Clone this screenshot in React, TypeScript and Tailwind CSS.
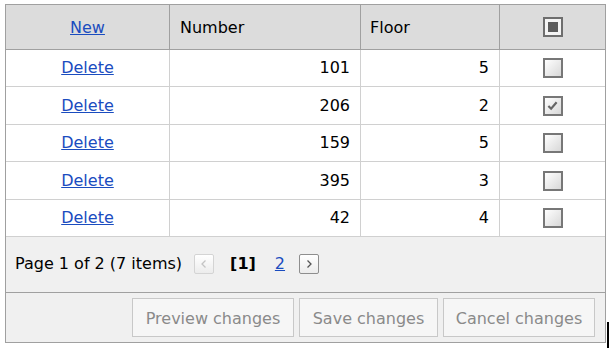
import { ReactNode } from "react";

const rows = [
    { number: 101, floor: 5, checked: false, h: "h-[37px]" },
    { number: 206, floor: 2, checked: true, h: "h-[38px]" },
    { number: 159, floor: 5, checked: false, h: "h-[37px]" },
    { number: 395, floor: 3, checked: false, h: "h-[38px]" },
    { number: 42, floor: 4, checked: false, h: "h-[37px]" },
];

const cols = "grid grid-cols-[164px_191px_139px_105px]";

function CheckBox({ checked }: { checked: boolean }) {
    return (
        <span className="flex w-[20px] h-[20px] items-center justify-center border-2 border-[#777777] bg-gradient-to-br from-white to-[#d8d8d8]">
            {checked && (
                <svg viewBox="0 0 12 12" className="w-[11px] h-[11px]">
                    <path d="M1.5 6.5 L4.5 9.5 L10.5 2.5" fill="none" stroke="#666666" strokeWidth="2.4" />
                </svg>
            )}
        </span>
    );
}

function PagerArrow({ dir, disabled }: { dir: "left" | "right"; disabled?: boolean }) {
    return (
        <span
            className={`flex w-[20px] h-[20px] items-center justify-center rounded-[2px] border bg-gradient-to-b from-white to-[#ececec] ${
                disabled ? "border-[#d4d4d4]" : "border-[#8e8e8e]"
            }`}
        >
            <svg viewBox="0 0 10 10" className="w-[10px] h-[10px]">
                <path
                    d={dir === "left" ? "M6.5 1.5 L3 5 L6.5 8.5" : "M3.5 1.5 L7 5 L3.5 8.5"}
                    fill="none"
                    stroke={disabled ? "#c4c4c4" : "#555555"}
                    strokeWidth="1.3"
                />
            </svg>
        </span>
    );
}

function Cell({ children, className = "" }: { children?: ReactNode; className?: string }) {
    return <div className={`flex items-center border-r border-[#d0d0d0] ${className}`}>{children}</div>;
}

export default function App() {
    return (
        <div className="relative w-[609px] h-[348px] bg-white pl-[5px] pt-[4px] text-[16px] text-black font-['DejaVu_Sans',sans-serif]">
            <div className="w-[601px] border border-[#a0a0a0]">
                {/* Header */}
                <div className={`${cols} h-[45px] bg-[#dcdcdc] border-b border-[#a0a0a0]`}>
                    <div className="flex items-center justify-center pt-[2px] border-r border-[#a0a0a0]">
                        <a href="#" className="text-[#1a4cbf] underline">New</a>
                    </div>
                    <div className="flex items-center pl-[10px] pt-[2px] border-r border-[#a0a0a0]">Number</div>
                    <div className="flex items-center pl-[9px] pt-[2px] border-r border-[#a0a0a0]">Floor</div>
                    <div className="flex items-center justify-center">
                        <span className="flex w-[20px] h-[20px] border-2 border-[#6e6e6e] bg-[#f4f4f4] p-[3px]">
                            <span className="flex-1 bg-[#5c5c5c]" />
                        </span>
                    </div>
                </div>

                {/* Rows */}
                {rows.map((r) => (
                    <div key={r.number} className={`${cols} ${r.h} border-b border-[#d0d0d0]`}>
                        <Cell className="justify-center">
                            <a href="#" className="text-[#1a4cbf] underline">Delete</a>
                        </Cell>
                        <Cell className="justify-end pr-[10px]">{r.number}</Cell>
                        <Cell className="justify-end pr-[10px]">{r.floor}</Cell>
                        <div className="flex items-center justify-center">
                            <CheckBox checked={r.checked} />
                        </div>
                    </div>
                ))}

                {/* Pager */}
                <div className="flex h-[56px] items-center bg-[#f0f0f0] border-b border-[#a0a0a0] pl-[9px] pb-[1px]">
                    <span>Page 1 of 2 (7 items)</span>
                    <span className="ml-[12px]">
                        <PagerArrow dir="left" disabled />
                    </span>
                    <span className="ml-[16px] font-bold">[1]</span>
                    <a href="#" className="ml-[19px] text-[#1a4cbf] underline">2</a>
                    <span className="ml-[14px]">
                        <PagerArrow dir="right" />
                    </span>
                </div>

                {/* Batch edit buttons */}
                <div className="flex h-[49px] justify-end gap-[5px] bg-[#f0f0f0] pt-[5px] pr-[10px]">
                    {[
                        { label: "Preview changes", w: "w-[162px]" },
                        { label: "Save changes", w: "w-[139px]" },
                        { label: "Cancel changes", w: "w-[152px]" },
                    ].map((b) => (
                        <button
                            key={b.label}
                            className={`${b.w} h-[39px] pt-[3px] border border-[#c8c8c8] bg-[#f6f6f6] text-[#8a8a8a]`}
                        >
                            {b.label}
                        </button>
                    ))}
                </div>
            </div>
            <div className="absolute left-[607px] top-[322px] w-[2px] h-[26px] bg-black" />
        </div>
    );
}
